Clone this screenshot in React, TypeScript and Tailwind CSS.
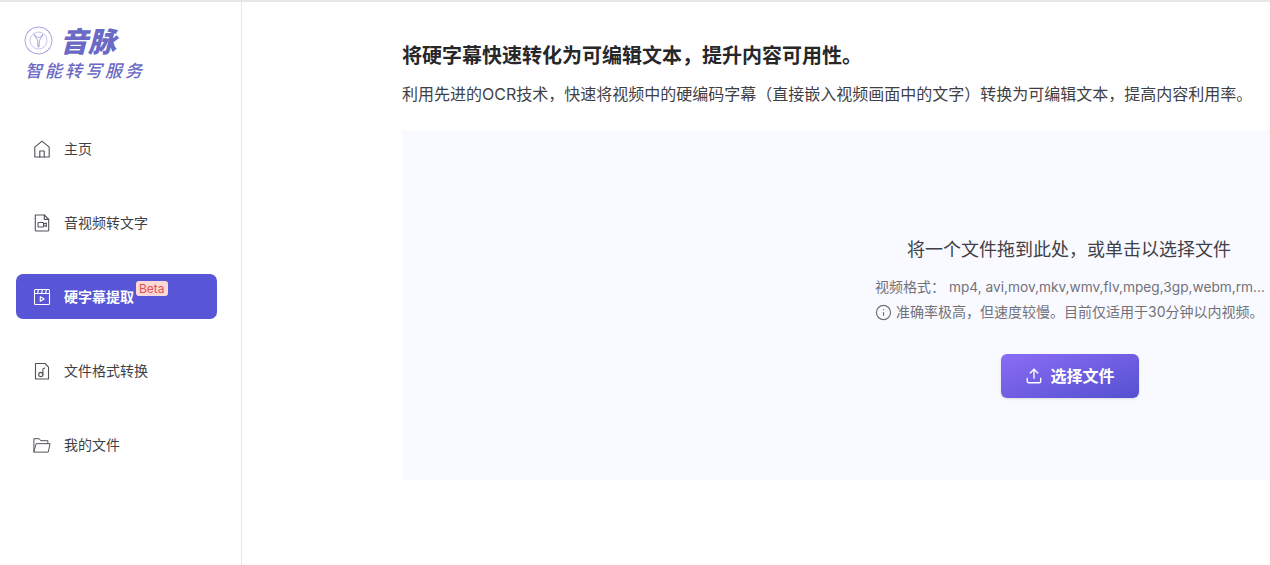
import React from "react";
import { Info, Upload } from "lucide-react";

const S = { fill: "none", stroke: "currentColor", strokeWidth: 1.100, strokeLinecap: "round", strokeLinejoin: "round" } as const;

function HomeIcon() {
  return (
    <svg width="18" height="18" viewBox="0 0 18 18" {...S}>
      <path d="M1.800 7.200 9 1.200l7.200 6V17H1.800z" />
      <path d="M6.800 17v-6h4.400v6" />
    </svg>
  );
}
function VideoFileIcon() {
  return (
    <svg width="18" height="18" viewBox="0 0 18 18" {...S}>
      <path d="M2.300 1h9l4.400 4.400V16a1 1 0 0 1-1 1H3.300a1 1 0 0 1-1-1z" />
      <path d="M11.300 1v4.400h4.400" />
      <rect x="5" y="8.500" width="5.500" height="4.500" rx="0.800" />
      <path d="m10.500 10 2.800-1v3.500l-2.800-1" />
    </svg>
  );
}
function ClapIcon() {
  return (
    <svg width="18" height="18" viewBox="0 0 18 18" {...S}>
      <rect x="1.500" y="1.500" width="15" height="15" rx="1" />
      <path d="M1.500 5.500h15M5.500 1.500l-1 4M9.500 1.500l-1 4M13.500 1.500l-1 4" />
      <path d="M7.300 8.800v4.500l3.900-2.250z" />
    </svg>
  );
}
function MusicFileIcon() {
  return (
    <svg width="18" height="18" viewBox="0 0 18 18" {...S}>
      <path d="M2.500 1.500h9.500l3.500 3.700V17h-13z" />
      <circle cx="7.800" cy="12.500" r="2.100" />
      <path d="M9.900 12.500V7l1.800-.9" />
    </svg>
  );
}
function FolderIcon() {
  return (
    <svg width="20" height="18" viewBox="0 0 20 18" {...S}>
      <path d="M1 16.500V2h6l1.500 2.200H16.500V7.500" />
      <path d="M1 16.500 3.500 7.500h15.500L17 16.500z" />
    </svg>
  );
}

function Logo() {
  return (
    <div className="h-[92px] pl-[8px] pt-[22px]">
      <div className="flex items-center gap-[7px]">
        <svg width="29" height="29" viewBox="0 0 29 29" fill="none" stroke="#8f8bd6" strokeWidth="0.800">
          <circle cx="14.500" cy="14.500" r="13.500" />
          <path d="M7 2.800 2.800 7M22 2.800 26.200 7M2.800 22 7 26.200M26.200 22 22 26.200" strokeWidth="0.600" />
          <circle cx="14.500" cy="14.500" r="8.500" strokeWidth="0.500" />
          <path d="M10 8.500c1.200 2.800 3.200 4.200 3.700 7l.3 5.500h1l.3-5.500c.5-2.800 2.500-4.200 3.700-7-1.600 1.400-3 2.800-4.500 3.200-1.500-.4-2.900-1.800-4.500-3.200z" fill="#fff" />
        </svg>
        <span className="text-[28px] leading-[30px] font-black italic text-[#6a69c6] [font-family:'Noto_Sans_CJK_SC',sans-serif]">音脉</span>
      </div>
      <div className="mt-[4px] ml-[1px] text-[17px] leading-[22px] font-medium italic tracking-[3px] text-[#6a69c6] whitespace-nowrap [font-family:'Noto_Sans_CJK_SC',sans-serif]">智能转写服务</div>
    </div>
  );
}

function NavItem({ icon, label, active, beta }: { icon: React.ReactNode; label: string; active?: boolean; beta?: boolean }) {
  return (
    <div className={`relative flex h-[45px] items-center gap-[13px] rounded-[7px] pl-[17px] text-[14px] ${active ? "bg-[#5856d6] font-bold text-white" : "text-[#3f3f46]"}`}>
      <span className={`flex w-[18px] shrink-0 ${active ? "text-white" : "text-[#52525b]"}`}>{icon}</span>
      <span className="leading-[20px]">{label}</span>
      {beta && (
        <span className="absolute left-[120px] top-[7px] h-[15px] rounded-[3px] bg-[#fed7d7] px-[3px] text-[12px] leading-[15px] font-normal text-[#e05252]">Beta</span>
      )}
    </div>
  );
}

export default function App() {
  return (
    <div className="flex h-[565px] w-[1270px] overflow-hidden border-t-2 border-[#e5e7eb] bg-white [font-family:Inter,'Noto_Sans_CJK_SC',sans-serif]">
      <aside className="w-[242px] shrink-0 border-r border-[#e5e7eb] px-[16px] pt-[1px] pr-[24px]">
        <Logo />
        <nav className="mt-[30px] flex flex-col gap-[29px] pt-[1px]">
          <NavItem icon={<HomeIcon />} label="主页" />
          <NavItem icon={<VideoFileIcon />} label="音视频转文字" />
          <NavItem icon={<ClapIcon />} label="硬字幕提取" active beta />
          <NavItem icon={<MusicFileIcon />} label="文件格式转换" />
          <NavItem icon={<FolderIcon />} label="我的文件" />
        </nav>
      </aside>
      <main className="min-w-0 flex-1 pl-[160px] pt-[39px]">
        <h1 className="text-[20px] leading-[30px] font-bold text-[#27272a] whitespace-nowrap">将硬字幕快速转化为可编辑文本，提升内容可用性。</h1>
        <p className="mt-[10px] text-[16px] leading-[26px] text-[#3f3f46] whitespace-nowrap">利用先进的OCR技术，快速将视频中的硬编码字幕（直接嵌入视频画面中的文字）转换为可编辑文本，提高内容利用率。</p>
        <section className="mt-[23px] flex h-[350px] w-[1334px] flex-col items-center bg-[#f9faff] pt-[106px]">
          <div className="text-[18px] leading-[28px] text-[#3f3f46]">将一个文件拖到此处，或单击以选择文件</div>
          <div className="mt-[12px] ml-[8px] flex w-[396px] text-[14px] leading-[22px] text-[#71717a] whitespace-nowrap">
            <span className="shrink-0">视频格式：</span>
            <span className="ml-[4px] text-[13.700px]">mp4, avi,mov,mkv,wmv,flv,mpeg,3gp,webm,rm...</span>
          </div>
          <div className="mt-[3px] ml-[8px] flex w-[396px] items-center gap-[4px] text-[14px] leading-[22px] text-[#71717a] whitespace-nowrap">
            <Info size={17} strokeWidth={1.700} className="shrink-0" />
            <span>准确率极高，但速度较慢。目前仅适用于30分钟以内视频。</span>
          </div>
          <button className="mt-[31px] ml-[2px] flex h-[44px] w-[138px] items-center justify-center gap-[7px] rounded-[6px] bg-gradient-to-br from-[#8b6cf6] to-[#5451cf] text-[16px] font-bold text-white shadow-sm">
            <Upload size={18} strokeWidth={1.800} />
            选择文件
          </button>
        </section>
      </main>
    </div>
  );
}
